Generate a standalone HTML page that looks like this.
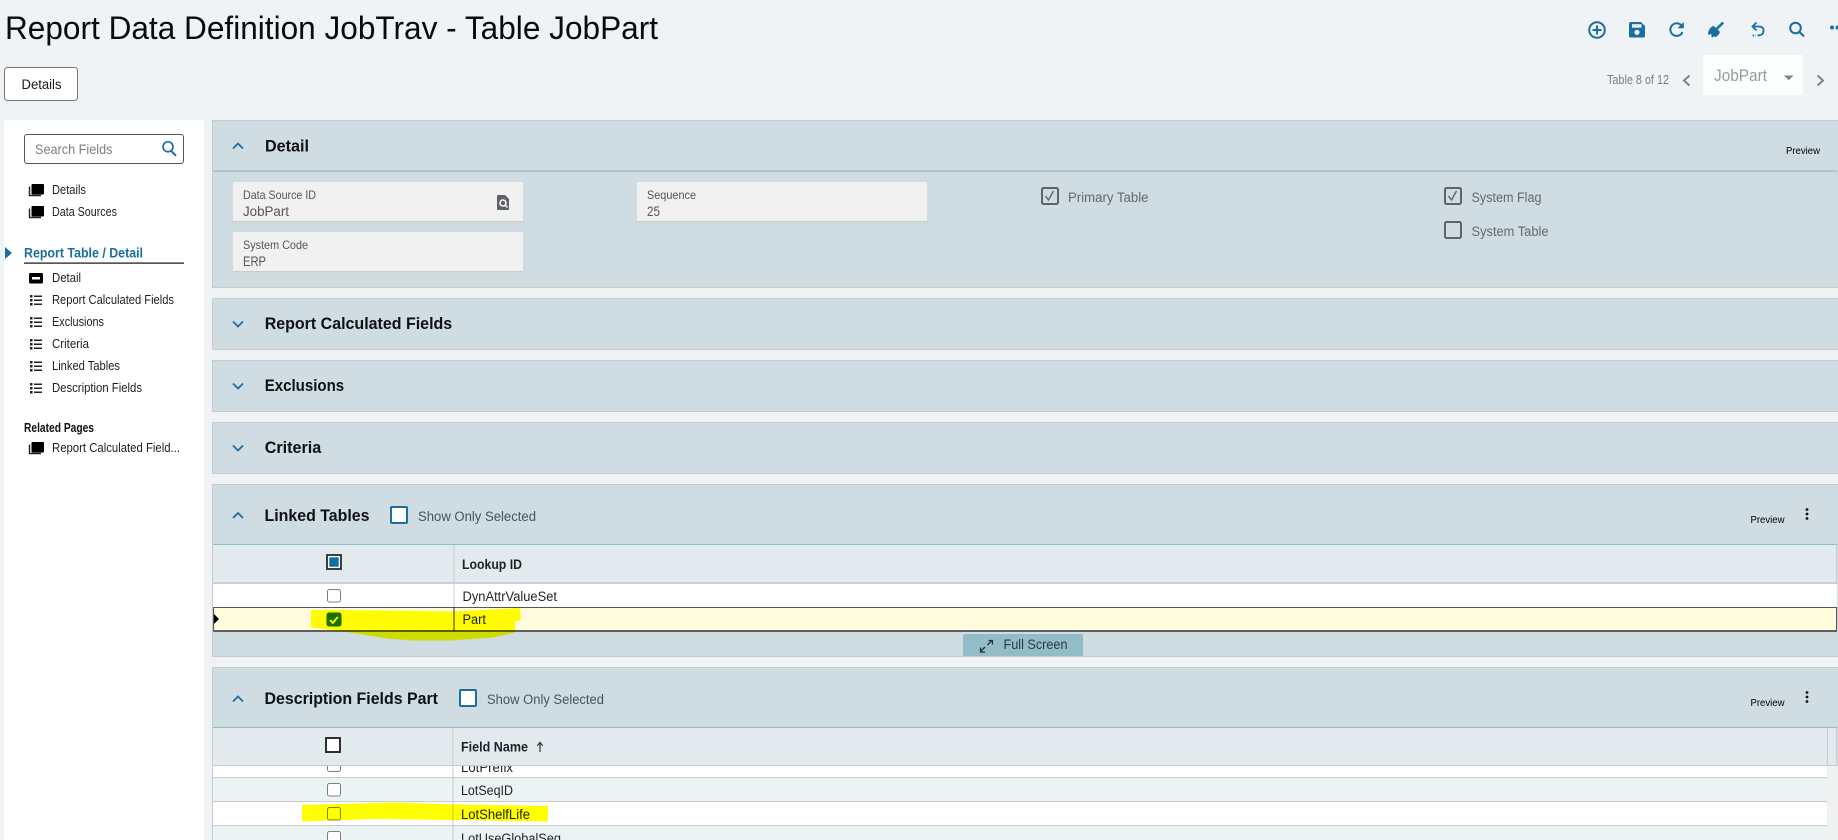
<!DOCTYPE html>
<html><head><meta charset="utf-8"><title>Report Data Definition</title>
<style>
html,body{margin:0;padding:0;background:#eff3f6;width:1838px;height:840px;overflow:hidden}
svg{display:block;font-family:"Liberation Sans",sans-serif}
.h{font-size:17px;font-weight:700;fill:#0d1114}
.n{font-size:12.5px;fill:#1b1f22}
.l{font-size:12px;fill:#555}
.v{font-size:13.5px;fill:#555}
.c{font-size:13.5px;fill:#5f6a6e}
.s{font-size:13.5px;fill:#46555c}
.r{font-size:13.5px;fill:#1e2326}
.b{font-size:13.5px;font-weight:700;fill:#1c2226}
.p{font-size:10.5px;fill:#000}
.pan{fill:#cfdce1;stroke:#c8cccd;stroke-width:1}
.ch{fill:none;stroke:#1a6f9f;stroke-width:1.8}
.ic{fill:none;stroke:#1a6f9f;stroke-width:2}
.hl{fill:#ffff00;mix-blend-mode:multiply}
</style></head><body>
<svg width="1838" height="840" viewBox="0 0 1838 840" xmlns="http://www.w3.org/2000/svg">
<rect width="1838" height="840" fill="#eff3f6"/>

<!-- header -->
<text x="5" y="39" font-size="32" fill="#0a0a0a" textLength="653" lengthAdjust="spacingAndGlyphs">Report Data Definition JobTrav - Table JobPart</text>
<rect x="4.5" y="67.5" width="73" height="33" rx="3" fill="#fff" stroke="#777"/>
<text x="21.5" y="89" font-size="13.5" fill="#1a1a1a" textLength="40" lengthAdjust="spacingAndGlyphs">Details</text>

<!-- toolbar icons -->
<circle cx="1597" cy="30" r="7.8" class="ic"/>
<path d="M1597 25.5v9M1592.500 30h9" class="ic"/>
<path d="M1629 24q0-2 2-2h10l4 4v10q0 1.500-1.500 1.500h-13q-1.500 0-1.500-1.500z" fill="#1a6f9f"/>
<rect x="1632" y="24.200" width="9.500" height="3.500" fill="#eff3f6"/>
<circle cx="1637" cy="32.300" r="2.600" fill="#eff3f6"/>
<path d="M1682.500 32a6.300 6.300 0 1 1-1.500-7" class="ic"/>
<path d="M1683.800 22v6.300h-6.300z" fill="#1a6f9f"/>
<path d="M1716.500 29l6.700-6.500" stroke="#1a6f9f" stroke-width="2.600" fill="none"/>
<path d="M1713.500 25.800l6.500 6q-1 3.500-4.500 5.500l-1.500-1-1.200 1.200-1.800-1.200.8-1.500-1.400-.8-1.300 1-1.100-.9q0-5.500 5.500-8.300z" fill="#1a6f9f"/>
<path d="M1756.500 22.500l-4 4 4 4" fill="none" stroke="#1a6f9f" stroke-width="1.800"/>
<path d="M1753 26.500h6q4.500 0 4.500 4.300t-4.500 4.500h-1.500" fill="none" stroke="#1a6f9f" stroke-width="1.800"/>
<path d="M1752.500 35.500h3" stroke="#1a6f9f" stroke-width="1.800" stroke-dasharray="1.300 1"/>
<circle cx="1795.500" cy="28" r="5.300" class="ic"/>
<path d="M1799.500 32l4.500 4.500" class="ic"/>
<circle cx="1832" cy="27.500" r="2" fill="#1a6f9f"/><circle cx="1837.500" cy="27.500" r="2" fill="#1a6f9f"/>

<!-- pager -->
<text x="1607" y="84" font-size="12.500" fill="#7a7d80" textLength="62" lengthAdjust="spacingAndGlyphs">Table 8 of 12</text>
<path d="M1689.500 75.500l-5.500 5 5.500 5" fill="none" stroke="#808487" stroke-width="2"/>
<rect x="1703" y="55" width="100" height="40" fill="#fcfdfd"/>
<text x="1714" y="81" font-size="16.500" fill="#9a9c9e" textLength="53" lengthAdjust="spacingAndGlyphs">JobPart</text>
<path d="M1784 75.500h9.500l-4.750 4.800z" fill="#808487"/>
<path d="M1817.500 75.500l5.500 5-5.500 5" fill="none" stroke="#808487" stroke-width="2"/>

<!-- sidebar -->
<rect x="4" y="120" width="200" height="720" fill="#fff"/>
<rect x="24.500" y="134.500" width="159" height="29" rx="2.500" fill="#fff" stroke="#50565a"/>
<text x="35" y="154" font-size="13.500" fill="#7b8084" textLength="77.500" lengthAdjust="spacingAndGlyphs">Search Fields</text>
<circle cx="168" cy="146.800" r="5" fill="none" stroke="#1a6f9f" stroke-width="1.700"/>
<path d="M171.200 151l4.800 4.800" stroke="#1a6f9f" stroke-width="2" fill="none"/>

<g id="stk1"><rect x="31.500" y="184" width="12.500" height="10.500" rx="1" fill="#000"/><path d="M29.500 186.500v9h11.500" fill="none" stroke="#222" stroke-width="1.400"/></g>
<text x="52" y="194" class="n" textLength="34" lengthAdjust="spacingAndGlyphs">Details</text>
<g><rect x="31.500" y="206" width="12.500" height="10.500" rx="1" fill="#000"/><path d="M29.500 208.500v9h11.500" fill="none" stroke="#222" stroke-width="1.400"/></g>
<text x="52" y="216" class="n" textLength="65" lengthAdjust="spacingAndGlyphs">Data Sources</text>

<path d="M5 247l7 6-7 6z" fill="#1a6f9f"/>
<text x="24" y="257.500" font-size="14" font-weight="700" fill="#1a6f9f" textLength="119" lengthAdjust="spacingAndGlyphs">Report Table / Detail</text>
<rect x="24" y="262.500" width="160" height="1.200" fill="#111"/>

<rect x="29" y="273" width="14" height="10.500" rx="1.500" fill="#000"/><rect x="32" y="277" width="8" height="2.500" fill="#fff"/>
<text x="52" y="282" class="n" textLength="29" lengthAdjust="spacingAndGlyphs">Detail</text>

<g fill="#222">
<path d="M30 295h2.500v2.500H30zM34 295.500h8v1.500h-8zM30 299h2.500v2.500H30zM34 299.500h8v1.500h-8zM30 303h2.500v2.500H30zM34 303.500h8v1.500h-8z"/>
<path transform="translate(0 22)" d="M30 295h2.500v2.500H30zM34 295.500h8v1.500h-8zM30 299h2.500v2.500H30zM34 299.500h8v1.500h-8zM30 303h2.500v2.500H30zM34 303.500h8v1.500h-8z"/>
<path transform="translate(0 44)" d="M30 295h2.500v2.500H30zM34 295.500h8v1.500h-8zM30 299h2.500v2.500H30zM34 299.500h8v1.500h-8zM30 303h2.500v2.500H30zM34 303.500h8v1.500h-8z"/>
<path transform="translate(0 66)" d="M30 295h2.500v2.500H30zM34 295.500h8v1.500h-8zM30 299h2.500v2.500H30zM34 299.500h8v1.500h-8zM30 303h2.500v2.500H30zM34 303.500h8v1.500h-8z"/>
<path transform="translate(0 88)" d="M30 295h2.500v2.500H30zM34 295.500h8v1.500h-8zM30 299h2.500v2.500H30zM34 299.500h8v1.500h-8zM30 303h2.500v2.500H30zM34 303.500h8v1.500h-8z"/>
</g>
<text x="52" y="304" class="n" textLength="122" lengthAdjust="spacingAndGlyphs">Report Calculated Fields</text>
<text x="52" y="326" class="n" textLength="52" lengthAdjust="spacingAndGlyphs">Exclusions</text>
<text x="52" y="348" class="n" textLength="37" lengthAdjust="spacingAndGlyphs">Criteria</text>
<text x="52" y="370" class="n" textLength="68" lengthAdjust="spacingAndGlyphs">Linked Tables</text>
<text x="52" y="392" class="n" textLength="90" lengthAdjust="spacingAndGlyphs">Description Fields</text>

<text x="24" y="432" font-size="12.500" font-weight="700" fill="#111" textLength="70" lengthAdjust="spacingAndGlyphs">Related Pages</text>
<g><rect x="31.500" y="442" width="12.500" height="10.500" rx="1" fill="#000"/><path d="M29.500 444.500v9h11.500" fill="none" stroke="#222" stroke-width="1.400"/></g>
<text x="52" y="452" class="n" textLength="128" lengthAdjust="spacingAndGlyphs">Report Calculated Field...</text>

<!-- Detail panel -->
<rect class="pan" x="212.500" y="120.500" width="1630" height="167"/>
<rect x="213" y="170.500" width="1624" height="1.200" fill="#93bcc9"/>
<path d="M233 148.500l5-5 5 5" class="ch"/>
<text x="265" y="151.500" class="h" textLength="44" lengthAdjust="spacingAndGlyphs">Detail</text>
<text x="1786" y="154" class="p" textLength="34" lengthAdjust="spacingAndGlyphs">Preview</text>

<rect x="233" y="182" width="290" height="40" fill="#f1f1f1"/><rect x="233" y="221" width="290" height="1.200" fill="#c8cccc"/>
<text x="243" y="199" class="l" textLength="73" lengthAdjust="spacingAndGlyphs">Data Source ID</text>
<text x="243" y="216" class="v" textLength="46" lengthAdjust="spacingAndGlyphs">JobPart</text>
<path d="M497 196q0-1 1-1h7l4 4v10q0 1-1 1h-10q-1 0-1-1z" fill="#5f6367"/>
<circle cx="503" cy="203" r="3" fill="none" stroke="#fff" stroke-width="1.500"/><path d="M505 205l2.500 2.500" stroke="#fff" stroke-width="1.500"/>

<rect x="637" y="182" width="290" height="40" fill="#f1f1f1"/><rect x="637" y="221" width="290" height="1.200" fill="#c8cccc"/>
<text x="647" y="199" class="l" textLength="49" lengthAdjust="spacingAndGlyphs">Sequence</text>
<text x="647" y="216" class="v" textLength="13" lengthAdjust="spacingAndGlyphs">25</text>

<rect x="233" y="232" width="290" height="40" fill="#f1f1f1"/><rect x="233" y="271" width="290" height="1.200" fill="#c8cccc"/>
<text x="243" y="249" class="l" textLength="65" lengthAdjust="spacingAndGlyphs">System Code</text>
<text x="243" y="266" class="v" textLength="23" lengthAdjust="spacingAndGlyphs">ERP</text>

<rect x="1042" y="188" width="16" height="16" rx="1.500" fill="none" stroke="#606366" stroke-width="2"/>
<path d="M1045.500 196l3 4 5-9" fill="none" stroke="#606366" stroke-width="1.400"/>
<text x="1068" y="202" class="c" textLength="80.500" lengthAdjust="spacingAndGlyphs">Primary Table</text>
<rect x="1445" y="188" width="16" height="16" rx="1.500" fill="none" stroke="#606366" stroke-width="2"/>
<path d="M1448.500 196l3 4 5-9" fill="none" stroke="#606366" stroke-width="1.400"/>
<text x="1471.500" y="202" class="c" textLength="70" lengthAdjust="spacingAndGlyphs">System Flag</text>
<rect x="1445" y="222" width="16" height="16" rx="1.500" fill="none" stroke="#606366" stroke-width="2"/>
<text x="1471.500" y="236" class="c" textLength="77" lengthAdjust="spacingAndGlyphs">System Table</text>

<!-- collapsed panels -->
<rect class="pan" x="212.500" y="298.500" width="1630" height="51"/>
<path d="M233 321.500l5 5 5-5" class="ch"/>
<text x="264.700" y="329" class="h" textLength="187.500" lengthAdjust="spacingAndGlyphs">Report Calculated Fields</text>
<rect class="pan" x="212.500" y="360.500" width="1630" height="51"/>
<path d="M233 383.500l5 5 5-5" class="ch"/>
<text x="264.700" y="391" class="h" textLength="79.500" lengthAdjust="spacingAndGlyphs">Exclusions</text>
<rect class="pan" x="212.500" y="422.500" width="1630" height="51"/>
<path d="M233 445.500l5 5 5-5" class="ch"/>
<text x="264.700" y="453" class="h" textLength="56.500" lengthAdjust="spacingAndGlyphs">Criteria</text>

<!-- Linked Tables -->
<rect class="pan" x="212.500" y="484.500" width="1630" height="172"/>
<path d="M233 518l5-5 5 5" class="ch"/>
<text x="264.500" y="521" class="h" textLength="105" lengthAdjust="spacingAndGlyphs">Linked Tables</text>
<rect x="391" y="507" width="16" height="16" rx="1" fill="#fff" stroke="#1a6f9f" stroke-width="2"/>
<text x="418" y="521" class="s" textLength="118" lengthAdjust="spacingAndGlyphs">Show Only Selected</text>
<text x="1750.500" y="523" class="p" textLength="34" lengthAdjust="spacingAndGlyphs">Preview</text>
<g fill="#111"><circle cx="1807" cy="509.500" r="1.400"/><circle cx="1807" cy="514" r="1.400"/><circle cx="1807" cy="518.500" r="1.400"/></g>
<rect x="213" y="544" width="1624" height="1.200" fill="#93bcc9"/>

<rect x="213" y="545" width="1624" height="37" fill="#e2eaed"/>
<rect x="213" y="582" width="1624" height="2" fill="#cdcfd0"/>
<rect x="453.500" y="545" width="1" height="37" fill="#c8cdcf"/>
<rect x="1836" y="545" width="1" height="37" fill="#c8cdcf"/>
<rect x="327" y="555" width="14" height="14" fill="#fff" stroke="#3a3f45" stroke-width="2"/>
<rect x="329.300" y="557.300" width="9.400" height="9.400" fill="#0f6ea4"/>
<text x="462" y="569" class="b" textLength="60" lengthAdjust="spacingAndGlyphs">Lookup ID</text>

<rect x="213" y="584" width="1624" height="23" fill="#fff"/>
<rect x="327.500" y="589.500" width="13" height="12.500" rx="2" fill="#fff" stroke="#7d8083"/>
<text x="462.500" y="601" class="r" textLength="94.500" lengthAdjust="spacingAndGlyphs">DynAttrValueSet</text>
<rect x="453.500" y="584" width="1" height="23" fill="#cdcfd0"/>
<rect x="213" y="607" width="1624" height="24" fill="#fffbdc"/>
<rect x="213.500" y="607.500" width="1623" height="23" fill="none" stroke="#555" stroke-width="1"/>
<rect x="213" y="630" width="1624" height="2" fill="#5d5f60"/>
<rect x="453.500" y="607" width="1" height="24" fill="#333"/>
<path d="M214 614l5 5-5 5z" fill="#000"/>
<rect x="327" y="613" width="14" height="13" rx="2" fill="#1a6f9f" stroke="#1a6f9f"/>
<path d="M330 620l2.800 3 5-6" fill="none" stroke="#fff" stroke-width="1.800"/>
<text x="462.500" y="624" class="r" textLength="23.500" lengthAdjust="spacingAndGlyphs">Part</text>

<path d="M963 656v-20q0-2 2-2h116q2 0 2 2v20z" fill="#93bcc9"/>
<path d="M987.500 645l4.500-4.500M988.500 640.500h4v4M985 647l-4 4M980.500 647.500v4.500h4.500" fill="none" stroke="#22323a" stroke-width="1.300"/>
<text x="1003.500" y="649" font-size="13.500" fill="#2a3a42" textLength="64" lengthAdjust="spacingAndGlyphs">Full Screen</text>

<!-- Description Fields -->
<rect class="pan" x="212.500" y="667.500" width="1630" height="180"/>
<path d="M233 701.500l5-5 5 5" class="ch"/>
<text x="264.500" y="704" class="h" textLength="173.500" lengthAdjust="spacingAndGlyphs">Description Fields Part</text>
<rect x="460" y="690" width="16" height="16" rx="1" fill="#fff" stroke="#1a6f9f" stroke-width="2"/>
<text x="487" y="704" class="s" textLength="117" lengthAdjust="spacingAndGlyphs">Show Only Selected</text>
<text x="1750.500" y="706" class="p" textLength="34" lengthAdjust="spacingAndGlyphs">Preview</text>
<g fill="#111"><circle cx="1807" cy="692.500" r="1.400"/><circle cx="1807" cy="697" r="1.400"/><circle cx="1807" cy="701.500" r="1.400"/></g>
<rect x="213" y="727" width="1624" height="1.200" fill="#93bcc9"/>

<rect x="213" y="728" width="1624" height="37" fill="#e2eaed"/>
<rect x="213" y="765" width="1624" height="1" fill="#c8cccd"/>
<rect x="452.500" y="728" width="1" height="37" fill="#c8cdcf"/>
<rect x="1827" y="728" width="1" height="37" fill="#c8cdcf"/>
<rect x="1836" y="728" width="1" height="37" fill="#c8cdcf"/>
<rect x="326" y="738" width="14" height="14" fill="#fff" stroke="#2c3034" stroke-width="2"/>
<text x="461" y="751.500" class="b" textLength="67" lengthAdjust="spacingAndGlyphs">Field Name</text>
<path d="M540 752v-9M537.300 745.800l2.700-3.300 2.700 3.300" fill="none" stroke="#333" stroke-width="1.200"/>

<rect x="213" y="766" width="1614" height="11" fill="#fff"/>
<rect x="213" y="777" width="1614" height="24" fill="#ecf3f5"/>
<rect x="213" y="801" width="1614" height="24" fill="#fff"/>
<rect x="213" y="825" width="1614" height="15" fill="#ecf3f5"/>
<rect x="213" y="777" width="1614" height="1" fill="#c8cccd"/>
<rect x="213" y="801" width="1614" height="1" fill="#c8cccd"/>
<rect x="213" y="825" width="1614" height="1" fill="#c8cccd"/>
<rect x="452.500" y="766" width="1" height="74" fill="#c8cccd"/>
<rect x="1827" y="766" width="11" height="74" fill="#f0f1f1"/>

<svg x="213" y="766" width="1614" height="74" viewBox="213 766 1614 74" overflow="hidden">
<rect x="327.500" y="759" width="13" height="12.500" rx="2" fill="#fff" stroke="#7d8083"/>
<text x="461" y="772" class="r" textLength="52" lengthAdjust="spacingAndGlyphs">LotPrefix</text>
<rect x="327.500" y="783.500" width="13" height="12.500" rx="2" fill="#fff" stroke="#7d8083"/>
<text x="461" y="795" class="r" textLength="52" lengthAdjust="spacingAndGlyphs">LotSeqID</text>
<rect x="327.500" y="807.500" width="13" height="12.500" rx="2" fill="#fff" stroke="#7d8083"/>
<text x="461" y="819" class="r" textLength="69" lengthAdjust="spacingAndGlyphs">LotShelfLife</text>
<rect x="327.500" y="831.500" width="13" height="12.500" rx="2" fill="#fff" stroke="#7d8083"/>
<text x="461" y="843" class="r" textLength="100" lengthAdjust="spacingAndGlyphs">LotUseGlobalSeq</text>
</svg>

<!-- highlighter strokes -->
<path class="hl" d="M311 610L343 610L453 611.500L520 608L521 620L515 621.500L515 632.500L493 637.500L450 640.500L413 640.500L387 638.500L350 632.500L327 629.500L311 627.500Z"/>
<path class="hl" d="M302 805L397 802.500L453 804.500L548 806L548 821.500L460 820L373 819L302 821.500Z"/>
</svg>
</body></html>
